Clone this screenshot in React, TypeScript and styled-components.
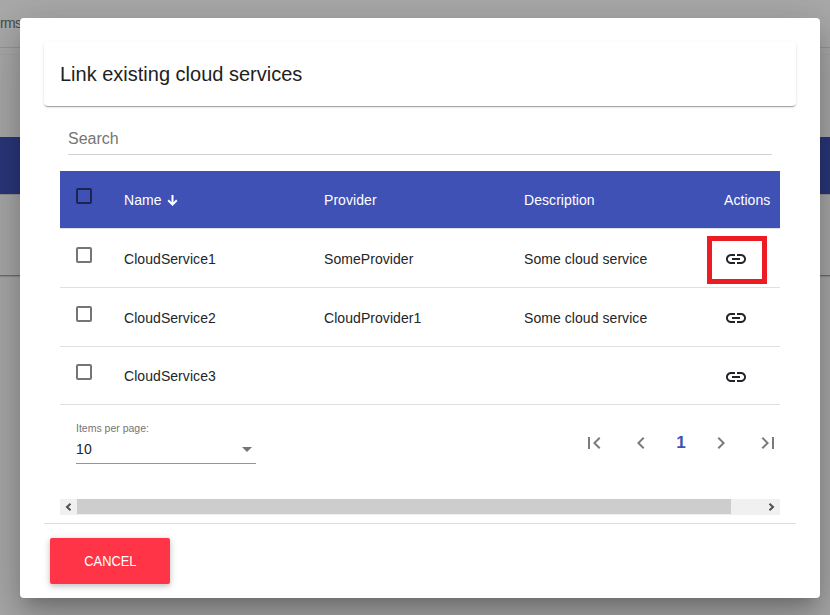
import React from "react";
import styled, { createGlobalStyle } from "styled-components";

const GlobalStyle = createGlobalStyle`
  *, *::before, *::after { box-sizing: border-box; }
  html, body { margin: 0; padding: 0; overflow: hidden; }
  body { font-family: "Liberation Sans", Arial, sans-serif; color: #212529; }
`;

const Page = styled.div`
  position: relative;
  width: 830px;
  height: 615px;
  overflow: hidden;
  background: #fafafa;
`;

const TabBar = styled.div`
  height: 48px;
  padding-top: 14px;
  border-bottom: 1px solid #dcdcdc;
  font-size: 14px;
  line-height: 18px;
  letter-spacing: -0.6px;
  color: #6f6f6f;
`;

const PageCard = styled.div`
  margin-top: 6px;
  height: 222px;
  padding-top: 82px;
  border-top: 1px solid #f0f0f0;
  border-bottom: 1px solid #a4a4a4;
  box-shadow: 0 1px 1px rgba(0, 0, 0, 0.14);
`;

const PageTableHead = styled.div`
  height: 58px;
  background: #3f51b5;
  border-bottom: 1px solid #d8d8d8;
`;

const Scrim = styled.div`
  position: absolute;
  inset: 0;
  padding: 18px 10px 17px 20px;
  background: rgba(0, 0, 0, 0.32);
`;

const Dialog = styled.div`
  height: 580px;
  padding: 24px 24px 0;
  border-radius: 4px;
  background: #fff;
  box-shadow: 0 11px 15px -7px rgba(0, 0, 0, 0.2),
    0 24px 38px 3px rgba(0, 0, 0, 0.14), 0 9px 46px 8px rgba(0, 0, 0, 0.12);
`;

const TitleCard = styled.div`
  height: 64px;
  padding: 0 16px;
  border-radius: 4px;
  font-size: 20px;
  line-height: 64px;
  color: #212121;
  box-shadow: 0 2px 1px -1px rgba(0, 0, 0, 0.2),
    0 1px 1px 0 rgba(0, 0, 0, 0.14), 0 1px 3px 0 rgba(0, 0, 0, 0.12);
`;

const SearchField = styled.div`
  height: 49px;
  margin: 0 24px;
  padding-top: 24px;
  border-bottom: 1px solid #ced0d4;
  font-size: 16px;
  line-height: 18px;
  color: #757575;
`;

const Table = styled.div`
  margin: 16px 16px 0;
`;

const Row = styled.div<{ $head?: boolean; $height: number }>`
  display: grid;
  grid-template-columns: 64px 200px 200px 1fr 56px;
  height: ${(p) => p.$height}px;
  border-bottom: 1px solid #dee0e4;
  background: ${(p) => (p.$head ? "#3f51b5" : "#fff")};
  background-clip: padding-box;
  color: ${(p) => (p.$head ? "#fff" : "#212529")};
  font-size: 14px;
  letter-spacing: 0.06px;
`;

const Cell = styled.div<{ $top: number }>`
  display: flex;
  align-items: center;
  gap: 3px;
  height: 18px;
  margin-top: ${(p) => p.$top}px;
  line-height: 18px;
  white-space: nowrap;
`;

const ActionIcon = styled.div<{ $top: number }>`
  padding-top: ${(p) => p.$top}px;
  line-height: 0;
`;

const Checkbox = styled.span<{ $head?: boolean; $top: number }>`
  width: 16px;
  height: 16px;
  margin: ${(p) => p.$top}px 0 0 16px;
  border: 2px solid ${(p) => (p.$head ? "#1c2451" : "#757575")};
  border-radius: 2px;
`;

const Highlight = styled.div`
  position: absolute;
  left: 707px;
  top: 236px;
  width: 60px;
  height: 48px;
  border: 5px solid #ed1c24;
`;

const Paginator = styled.div`
  display: flex;
  justify-content: space-between;
  height: 94px;
  margin: 0 16px;
  padding: 18px 0 0 16px;
`;

const PageSize = styled.div`
  width: 180px;
  height: 41px;
  border-bottom: 1px solid #949494;
`;

const PageSizeLabel = styled.div`
  margin-top: -1px;
  font-size: 10.5px;
  line-height: 12px;
  color: #757575;
`;

const PageSizeValue = styled.div`
  display: flex;
  align-items: center;
  justify-content: space-between;
  height: 18px;
  margin-top: 6px;
  padding-right: 4px;
  font-size: 14px;
  line-height: 18px;
  letter-spacing: 0.2px;
`;

const PageButtons = styled.div`
  display: grid;
  grid-template-columns: 54px 40px 40px 40px 53px;
  height: 40px;
  margin-right: -14px;
  align-items: center;
  justify-items: center;
`;

const CurrentPage = styled.span`
  padding-bottom: 1px;
  font-size: 17px;
  font-weight: 700;
  line-height: 18px;
  color: #3f51b5;
`;

const Scrollbar = styled.div`
  display: flex;
  height: 16px;
  margin: 0 16px 8px;
  background: #f0f0f0;
`;

const ScrollArrow = styled.div`
  width: 17px;
  height: 15px;
  display: grid;
  place-items: center;
`;

const ScrollTrack = styled.div`
  flex: 1;
`;

const ScrollThumb = styled.div`
  width: 654px;
  height: 15px;
  background: #cdcdcd;
`;

const Footer = styled.div`
  border-top: 1px solid #dedede;
  padding: 14px 6px 0;
`;

const CancelButton = styled.button`
  display: block;
  width: 120px;
  height: 46px;
  padding: 0;
  border: 0;
  border-radius: 2px;
  background: #ff3547;
  color: #fff;
  font: 14px "Liberation Sans", Arial, sans-serif;
  box-shadow: 0 2px 5px rgba(0, 0, 0, 0.16), 0 2px 10px rgba(0, 0, 0, 0.12);
`;

const ButtonLabel = styled.span`
  display: inline-block;
  transform: scaleX(0.92);
`;

const LinkIcon = () => (
  <svg width="24" height="24" viewBox="0 0 24 24" fill="#212529">
    <path d="M3.9 12c0-1.710 1.390-3.100 3.100-3.100h4V7H7c-2.760 0-5 2.240-5 5s2.240 5 5 5h4v-1.900H7c-1.710 0-3.100-1.390-3.100-3.100zM8 13h8v-2H8v2zm9-6h-4v1.900h4c1.710 0 3.100 1.390 3.100 3.100s-1.390 3.100-3.100 3.100h-4V17h4c2.760 0 5-2.240 5-5s-2.240-5-5-5z" />
  </svg>
);

const SortArrow = () => (
  <svg width="16" height="16" viewBox="0 0 16 16" fill="none" stroke="#fff" strokeWidth="2">
    <path d="M7.500 3v10M3.200 8.300l4.300 4.300 4.300-4.300" />
  </svg>
);

const navPaths = {
  first: "M18.410 16.590L13.820 12l4.590-4.590L17 6l-6 6 6 6zM6 6h2v12H6z",
  prev: "M15.410 7.410L14 6l-6 6 6 6 1.410-1.410L10.830 12z",
  next: "M10 6L8.590 7.410 13.170 12l-4.580 4.590L10 18l6-6z",
  last: "M5.590 7.410L10.180 12l-4.590 4.590L7 18l6-6-6-6zM16 6h2v12h-2z",
};

const NavIcon = ({ name }: { name: keyof typeof navPaths }) => (
  <svg width="24" height="24" viewBox="0 0 24 24" fill="#7b7b7b">
    <path d={navPaths[name]} />
  </svg>
);

const services = [
  { name: "CloudService1", provider: "SomeProvider", description: "Some cloud service", height: 59, box: 18, text: 21, icon: 18 },
  { name: "CloudService2", provider: "CloudProvider1", description: "Some cloud service", height: 59, box: 18, text: 21, icon: 18 },
  { name: "CloudService3", provider: "", description: "", height: 58, box: 17, text: 20, icon: 18 },
];

export default function App() {
  return (
    <Page>
      <GlobalStyle />
      <TabBar>rms</TabBar>
      <PageCard>
        <PageTableHead />
      </PageCard>
      <Scrim>
        <Dialog>
          <TitleCard>Link existing cloud services</TitleCard>
          <SearchField>Search</SearchField>
          <Table>
            <Row $head $height={58}>
              <Checkbox $head $top={17} />
              <Cell $top={20}>Name <SortArrow /></Cell>
              <Cell $top={20}>Provider</Cell>
              <Cell $top={20}>Description</Cell>
              <Cell $top={20}>Actions</Cell>
            </Row>
            {services.map((s) => (
              <Row key={s.name} $height={s.height}>
                <Checkbox $top={s.box} />
                <Cell $top={s.text}>{s.name}</Cell>
                <Cell $top={s.text}>{s.provider}</Cell>
                <Cell $top={s.text}>{s.description}</Cell>
                <ActionIcon $top={s.icon}><LinkIcon /></ActionIcon>
              </Row>
            ))}
          </Table>
          <Paginator>
            <PageSize>
              <PageSizeLabel>Items per page:</PageSizeLabel>
              <PageSizeValue>
                10
                <svg width="10" height="5" viewBox="0 0 10 5" fill="#757575">
                  <path d="M0 0h10L5 5z" />
                </svg>
              </PageSizeValue>
            </PageSize>
            <PageButtons>
              <NavIcon name="first" />
              <NavIcon name="prev" />
              <CurrentPage>1</CurrentPage>
              <NavIcon name="next" />
              <NavIcon name="last" />
            </PageButtons>
          </Paginator>
          <Scrollbar>
            <ScrollArrow>
              <svg width="7" height="8" viewBox="0 0 7 8" fill="none" stroke="#505050" strokeWidth="2">
                <path d="M5.500 .7L2 4l3.500 3.300" />
              </svg>
            </ScrollArrow>
            <ScrollTrack><ScrollThumb /></ScrollTrack>
            <ScrollArrow>
              <svg width="7" height="8" viewBox="0 0 7 8" fill="none" stroke="#505050" strokeWidth="2">
                <path d="M1.500 .7L5 4 1.500 7.300" />
              </svg>
            </ScrollArrow>
          </Scrollbar>
          <Footer>
            <CancelButton><ButtonLabel>CANCEL</ButtonLabel></CancelButton>
          </Footer>
        </Dialog>
      </Scrim>
      <Highlight />
    </Page>
  );
}
